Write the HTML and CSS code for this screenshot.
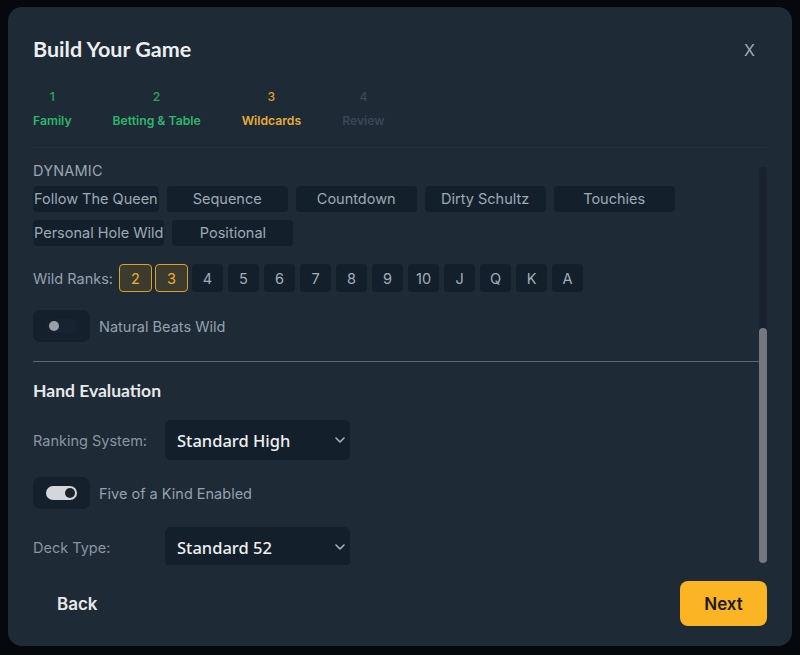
FILE: index.html
```html
<!DOCTYPE html>
<html>
<head>
<meta charset="utf-8">
<link rel="stylesheet" href="styles.css">
</head>
<body>
<div class="modal">
  <div class="header">
    <h1 class="title">Build Your Game</h1>
    <span class="close">X</span>
  </div>
  <div class="stepper">
    <div class="step done"><span class="num">1</span><span class="lbl">Family</span></div>
    <div class="step done"><span class="num">2</span><span class="lbl">Betting &amp; Table</span></div>
    <div class="step active"><span class="num">3</span><span class="lbl">Wildcards</span></div>
    <div class="step todo"><span class="num">4</span><span class="lbl">Review</span></div>
  </div>
  <div class="scroll">
    <div class="content">
      <div class="group-label">DYNAMIC</div>
      <div class="chips">
        <span class="chip">Follow The Queen</span>
        <span class="chip">Sequence</span>
        <span class="chip">Countdown</span>
        <span class="chip">Dirty Schultz</span>
        <span class="chip">Touchies</span>
        <span class="chip">Personal Hole Wild</span>
        <span class="chip">Positional</span>
      </div>
      <div class="ranks">
        <span class="field-label">Wild Ranks:</span>
        <span class="rank sel">2</span>
        <span class="rank sel">3</span>
        <span class="rank">4</span>
        <span class="rank">5</span>
        <span class="rank">6</span>
        <span class="rank">7</span>
        <span class="rank">8</span>
        <span class="rank">9</span>
        <span class="rank">10</span>
        <span class="rank">J</span>
        <span class="rank">Q</span>
        <span class="rank">K</span>
        <span class="rank">A</span>
      </div>
      <div class="toggle-row first-toggle">
        <span class="toggle"><span class="track off"><span class="knob"></span></span></span>
        <span class="toggle-text">Natural Beats Wild</span>
      </div>
      <div class="divider"></div>
      <h2 class="section-title">Hand Evaluation</h2>
      <div class="select-row">
        <span class="select-label">Ranking System:</span>
        <span class="select"><span class="select-value">Standard High</span>
          <svg class="chev" width="10" height="6" viewBox="0 0 10 6"><path d="M1 1l4 4 4-4" fill="none" stroke="#a9b2bc" stroke-width="1.6" stroke-linecap="round" stroke-linejoin="round"/></svg>
        </span>
      </div>
      <div class="toggle-row">
        <span class="toggle"><span class="track on"><span class="knob"></span></span></span>
        <span class="toggle-text">Five of a Kind Enabled</span>
      </div>
      <div class="select-row deck-row">
        <span class="select-label">Deck Type:</span>
        <span class="select"><span class="select-value">Standard 52</span>
          <svg class="chev" width="10" height="6" viewBox="0 0 10 6"><path d="M1 1l4 4 4-4" fill="none" stroke="#a9b2bc" stroke-width="1.6" stroke-linecap="round" stroke-linejoin="round"/></svg>
        </span>
      </div>
    </div>
    <div class="scrollbar"><div class="thumb"></div></div>
  </div>
  <div class="footer">
    <button class="back">Back</button>
    <button class="next">Next</button>
  </div>
</div>
</body>
</html>
```

FILE: styles.css
```css
* { box-sizing: border-box; }
html, body { margin: 0; padding: 0; }
body {
  background: #05080c;
  width: 800px;
  height: 655px;
  overflow: hidden;
  font-family: Inter, "Liberation Sans", sans-serif;
}
.modal {
  margin: 7px 8px 0 8px;
  width: 784px;
  height: 639px;
  background: #1e2a36;
  border-radius: 14px;
  padding: 0 25px 20px 25px;
  display: flex;
  flex-direction: column;
}
.header {
  display: flex;
  justify-content: space-between;
  align-items: center;
  padding-top: 23px;
  height: 60px;
}
.title {
  margin: 0;
  font-family: Lato, "Noto Sans", sans-serif;
  font-weight: 700;
  font-size: 21.5px;
  line-height: 26px;
  color: #eceef0;
}
.close {
  font-family: Inter, sans-serif;
  font-size: 16px;
  color: #a2abb5;
  margin-right: 12px;
  margin-top: 2px;
}
.stepper {
  margin-top: 21px;
  display: flex;
  gap: 41px;
  padding-bottom: 17px;
  border-bottom: 1px solid rgba(255,255,255,0.035);
}
.step {
  display: flex;
  flex-direction: column;
  align-items: center;
  gap: 6px;
  font-size: 12.2px;
  line-height: 18px;
}
.step .num { font-weight: 500; }
.step .lbl { font-weight: 600; }
.step.done .num { color: #26a864; }
.step.done .lbl { color: #2cb86c; }
.step.active .num { color: #d9a432; }
.step.active .lbl { color: #e6ae35; }
.step.todo .num, .step.todo .lbl { color: #3a4754; }
.scroll {
  margin-top: 12px;
  height: 405px;
  display: flex;
  overflow: hidden;
}
.content {
  flex: 1;
  padding-top: 2px;
  min-width: 0;
}
.scrollbar {
  width: 8px;
  margin: 7px 0 2px 0;
  background: #19212e;
  border-radius: 4px;
  display: flex;
  flex-direction: column;
  justify-content: flex-end;
}
.thumb {
  height: 235px;
  background: #77787f;
  border-radius: 4px;
}
.group-label {
  font-size: 14.5px;
  line-height: 17px;
  color: #9aa5b1;
  letter-spacing: 0.2px;
}
.chips {
  margin-top: 7px;
  display: flex;
  flex-wrap: wrap;
  gap: 8px 8px;
  width: 660px;
}
.chip {
  min-width: 121px;
  height: 26px;
  padding: 0 1px;
  background: #13202c;
  border-radius: 4px;
  color: #9ea9b5;
  font-size: 14.5px;
  line-height: 26px;
  text-align: center;
  white-space: nowrap;
}
.ranks {
  margin-top: 18px;
  display: flex;
  align-items: center;
  gap: 5px;
}
.field-label {
  font-size: 14.5px;
  color: #95a1ae;
  margin-right: 1px;
}
.rank {
  width: 31px;
  height: 28px;
  border-radius: 4px;
  background: #13202c;
  color: #a3adb8;
  font-size: 14.5px;
  display: flex;
  align-items: center;
  justify-content: center;
}
.rank.sel {
  width: 33px;
  margin-right: -2px;
  background: #3b3b30;
  border: 1px solid #d9a22b;
  color: #f0b030;
}
.rank.sel + .rank:not(.sel) { margin-left: 1px; }
.toggle-row {
  margin-top: 17px;
  display: flex;
  align-items: center;
  gap: 9px;
}
.first-toggle { margin-top: 18px; }
.toggle {
  width: 57px;
  height: 32px;
  background: #14202c;
  border-radius: 7px;
  display: flex;
  align-items: center;
  justify-content: center;
}
.track {
  width: 31px;
  height: 14px;
  border-radius: 7px;
  display: flex;
  align-items: center;
  padding: 0 2px;
}
.track.off { background: #172330; justify-content: flex-start; }
.track.on { background: #d3d6db; justify-content: flex-end; }
.knob {
  width: 10px;
  height: 10px;
  border-radius: 50%;
}
.track.off .knob { background: #9aa0a6; margin-left: 1px; }
.track.on .knob { background: #1d2026; }
.toggle-text {
  font-size: 14.5px;
  color: #95a1ae;
}
.divider {
  margin-top: 19px;
  height: 1px;
  background: #5a6874;
}
.section-title {
  margin: 19px 0 0 0;
  font-family: Lato, "Noto Sans", sans-serif;
  font-weight: 700;
  font-size: 17.5px;
  line-height: 20px;
  color: #e6e8ea;
}
.select-row {
  margin-top: 19px;
  display: flex;
  align-items: center;
}
.deck-row { margin-top: 18px; }
.select-label {
  width: 132px;
  font-size: 14.5px;
  color: #8a95a1;
}
.select {
  width: 185px;
  height: 40px;
  background: #13202c;
  border-radius: 6px;
  display: flex;
  align-items: center;
  justify-content: space-between;
  padding: 0 5px 0 12px;
}
.select-value {
  font-family: "Noto Sans", "Open Sans", sans-serif;
  font-weight: 500;
  font-size: 16.5px;
  color: #eef0f2;
}
.footer {
  margin-top: 16px;
  display: flex;
  justify-content: space-between;
  align-items: center;
}
.back {
  border: none;
  background: none;
  padding: 0 0 0 24px;
  font-family: Inter, sans-serif;
  font-weight: 600;
  font-size: 17px;
  color: #e8e9ea;
  height: 45px;
}
.next {
  width: 87px;
  height: 45px;
  border: none;
  border-radius: 8px;
  background: #fbb424;
  color: #1a1a1a;
  font-family: Inter, sans-serif;
  font-weight: 600;
  font-size: 17px;
}
```
